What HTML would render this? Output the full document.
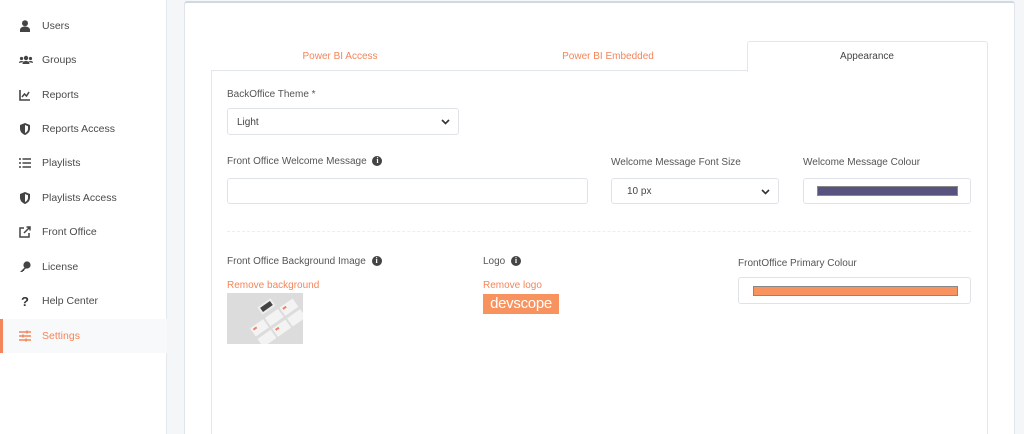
<!DOCTYPE html>
<html style="width:1024px;height:434px;overflow:hidden"><head><meta charset="utf-8"><style>
*{box-sizing:border-box;margin:0;padding:0}
body{width:1024px;height:434px;overflow:hidden;background:#f4f6f8;font-family:"Liberation Sans",sans-serif;font-size:10px;color:#555;position:relative}
.sb{position:absolute;left:0;top:0;width:167px;height:434px;background:#fff;border-right:1px solid #e6e9ec}
.it{position:absolute;left:0;width:167px;height:34px;line-height:34px;padding-left:42px;color:#4a4a4a;font-size:10.5px}
.it svg{position:absolute;left:19px;top:11px}
.act{background:#f8f9fa;color:#f5855a}
.act:before{content:"";position:absolute;left:0;top:0;width:3px;height:34px;background:#f5855a}
.card{position:absolute;left:184px;top:1px;width:831px;height:433px;background:#fff;border:1px solid #dfe5ea;border-top:2px solid #cfd9e2;border-bottom:none;border-radius:3px 3px 0 0}
.a{position:absolute;white-space:nowrap}
.box{position:absolute;border:1px solid #dfe3e7;border-radius:3px;background:#fff}
.o{color:#f5855a}
.info{display:inline-block;width:10px;height:10px;border-radius:50%;background:#444;color:#fff;font-size:8px;line-height:10px;text-align:center;font-weight:bold;font-family:"Liberation Serif",serif;vertical-align:1px;margin-left:3px}
.chev{position:absolute;right:8px;top:8px}
</style></head><body>
<div class="sb">
<div class="it" style="top:9px"><svg width="12" height="12" viewBox="0 0 12 12"><circle cx="6" cy="3.2" r="3" fill="#444"/><path d="M1 12v-2c0-2 2-3.5 5-3.5s5 1.5 5 3.5v2z" fill="#444"/></svg>Users</div>
<div class="it" style="top:43px"><svg width="14" height="12" viewBox="0 0 14 12"><circle cx="7" cy="4" r="2.2" fill="#444"/><circle cx="2.5" cy="4.5" r="1.6" fill="#444"/><circle cx="11.5" cy="4.5" r="1.6" fill="#444"/><path d="M3.5 10c0-2 1.5-3 3.5-3s3.5 1 3.5 3z M0 9c0-1.5 1-2 2.5-2s2 .5 2 1z M14 9c0-1.5-1-2-2.5-2s-2 .5-2 1z" fill="#444"/></svg>Groups</div>
<div class="it" style="top:78px"><svg width="12" height="12" viewBox="0 0 12 12"><path d="M1 1v10h10" stroke="#444" stroke-width="1.6" fill="none"/><path d="M3 8l2.5-3 2 2L10 3" stroke="#444" stroke-width="1.5" fill="none"/></svg>Reports</div>
<div class="it" style="top:112px"><svg width="12" height="12" viewBox="0 0 12 12"><path d="M6 0L11 2v3.5C11 9 8.5 11 6 12 3.5 11 1 9 1 5.5V2z" fill="#444"/><path d="M6 2l3 1.2v2.3C9 8 7.5 9.3 6 10z" fill="#fff"/></svg>Reports Access</div>
<div class="it" style="top:146px"><svg width="12" height="12" viewBox="0 0 12 12"><path d="M0 2h2M3.5 2H12M0 6h2M3.5 6H12M0 10h2M3.5 10H12" stroke="#444" stroke-width="1.6"/></svg>Playlists</div>
<div class="it" style="top:181px"><svg width="12" height="12" viewBox="0 0 12 12"><path d="M6 0L11 2v3.5C11 9 8.5 11 6 12 3.5 11 1 9 1 5.5V2z" fill="#444"/><path d="M6 2l3 1.2v2.3C9 8 7.5 9.3 6 10z" fill="#fff"/></svg>Playlists Access</div>
<div class="it" style="top:215px"><svg width="12" height="12" viewBox="0 0 12 12"><path d="M5 2H1v9h9V7" stroke="#444" stroke-width="1.5" fill="none"/><path d="M5 7l6-6M7.5 1H11v3.5" stroke="#444" stroke-width="1.5" fill="none"/></svg>Front Office</div>
<div class="it" style="top:250px"><svg width="12" height="12" viewBox="0 0 12 12"><circle cx="8" cy="4" r="3.6" fill="#444"/><path d="M6 6L1 11h2.5l.5-1h1l.5-1.5 2-1.5z" fill="#444"/></svg>License</div>
<div class="it" style="top:284px"><svg width="12" height="12" viewBox="0 0 12 12"><text x="2" y="11" font-size="13" font-weight="bold" fill="#333" font-family="Liberation Sans">?</text></svg>Help Center</div>
<div class="it act" style="top:319px"><svg width="12" height="12" viewBox="0 0 12 12"><path d="M0 2h12M0 6h12M0 10h12" stroke="#f5855a" stroke-width="1.4"/><path d="M8 0.5v3M4 4.5v3M7 8.5v3" stroke="#f5855a" stroke-width="1.6"/></svg>Settings</div>
</div>
<div class="card"></div>
<div class="a" style="left:211px;top:70px;width:777px;height:364px;border:1px solid #e3e7eb;border-bottom:none"></div>
<div class="a" style="left:747px;top:41px;width:241px;height:31px;background:#fff;border:1px solid #e3e7eb;border-bottom:none;border-radius:3px 3px 0 0"></div>
<div class="a o" style="left:280px;top:51px;width:120px;text-align:center">Power BI Access</div>
<div class="a o" style="left:540px;top:51px;width:136px;text-align:center">Power BI Embedded</div>
<div class="a" style="left:807px;top:51px;width:120px;text-align:center;color:#444">Appearance</div>

<div class="a" style="left:227px;top:89px">BackOffice Theme *</div>
<div class="box" style="left:227px;top:108px;width:232px;height:27px"><span class="a" style="left:9px;top:8px;color:#444">Light</span><svg class="chev" width="9" height="9" viewBox="0 0 9 9"><path d="M1 3l3.5 3.5L8 3" stroke="#333" stroke-width="1.6" fill="none"/></svg></div>

<div class="a" style="left:227px;top:156px">Front Office Welcome Message <span class="info">i</span></div>
<div class="box" style="left:227px;top:178px;width:361px;height:26px"></div>
<div class="a" style="left:611px;top:157px">Welcome Message Font Size</div>
<div class="box" style="left:611px;top:178px;width:168px;height:26px"><span class="a" style="left:15px;top:7px;color:#444;font-size:10px">10 px</span><svg class="chev" width="9" height="9" viewBox="0 0 9 9"><path d="M1 3l3.5 3.5L8 3" stroke="#333" stroke-width="1.6" fill="none"/></svg></div>
<div class="a" style="left:803px;top:157px">Welcome Message Colour</div>
<div class="box" style="left:803px;top:178px;width:168px;height:26px"><div class="a" style="left:13px;top:7px;width:141px;height:10px;background:#58527e;border:1px solid #888"></div></div>

<div class="a" style="left:227px;top:231px;width:744px;border-top:1px dashed #eceef0"></div>

<div class="a" style="left:227px;top:256px">Front Office Background Image <span class="info">i</span></div>
<div class="a o" style="left:227px;top:280px">Remove background</div>
<svg class="a" style="left:227px;top:293px" width="76" height="51" viewBox="0 0 76 51"><rect width="76" height="51" fill="#dcdcdc"/><g transform="rotate(-35 50 25)"><rect x="40" y="5" width="16" height="9" fill="#eee"/><rect x="42" y="7" width="12" height="5" fill="#444"/><rect x="22" y="18" width="16" height="10" fill="#f3f3f3"/><rect x="40" y="18" width="16" height="10" fill="#f3f3f3"/><rect x="58" y="18" width="16" height="10" fill="#f3f3f3"/><rect x="22" y="31" width="16" height="10" fill="#f3f3f3"/><rect x="40" y="31" width="16" height="10" fill="#f3f3f3"/><rect x="58" y="31" width="16" height="10" fill="#f3f3f3"/><rect x="24" y="20" width="4" height="2" fill="#f08060"/><rect x="42" y="33" width="4" height="2" fill="#f08060"/><rect x="60" y="20" width="4" height="2" fill="#f08060"/></g></svg>

<div class="a" style="left:483px;top:256px">Logo <span class="info">i</span></div>
<div class="a o" style="left:483px;top:280px">Remove logo</div>
<div class="a" style="left:483px;top:294px;width:76px;height:20px;background:#f8935f;color:#fff;font-size:15px;line-height:20px;text-align:center;letter-spacing:-0.3px">devscope</div>

<div class="a" style="left:738px;top:258px">FrontOffice Primary Colour</div>
<div class="box" style="left:738px;top:277px;width:233px;height:27px"><div class="a" style="left:14px;top:8px;width:205px;height:10px;background:#f8925f;border:1px solid #888"></div></div>
</body></html>
